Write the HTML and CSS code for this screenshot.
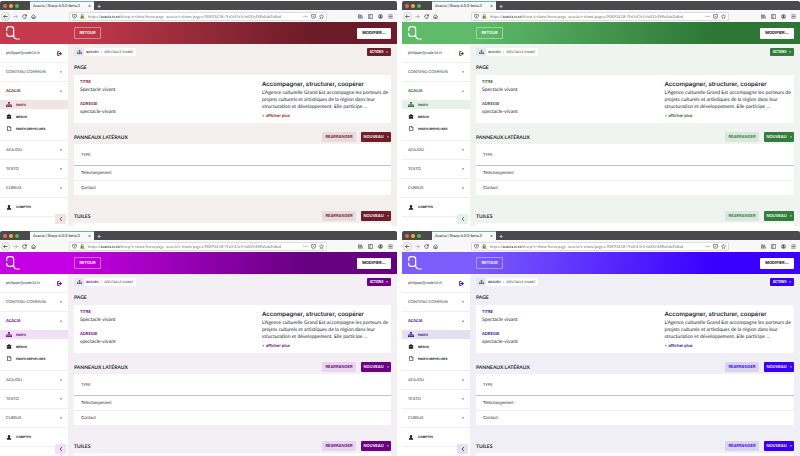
FILE: index.html
```html
<!DOCTYPE html>
<html lang="fr">
<head>
<meta charset="utf-8">
<title>Acacia | Sharp 6.0.0-beta.3</title>
<link rel="stylesheet" href="styles.css">
</head>
<body>
<svg class="sprite" aria-hidden="true">
  <symbol id="i-sitemap" viewBox="0 0 20 16"><path d="M7 0h6v5h-2v2h7v4h2v5h-6v-5h2V9h-5v2h2v5H7v-5h2V9H4v2h2v5H0v-5h2V7h7V5H7z"/></symbol>
  <symbol id="i-case" viewBox="0 0 16 16"><path d="M5 1h6v2h4v5H1V3h4zm1.500 1v1h3V2zM1 9h14v6H1z"/></symbol>
  <symbol id="i-file" viewBox="0 0 16 16"><path d="M3 1h7l4 4v10H3zM10 1v4h4" fill="none" stroke="currentColor" stroke-width="2"/></symbol>
  <symbol id="i-user" viewBox="0 0 16 16"><path d="M8 0a4 4 0 0 1 4 4c0 3-2 5-4 5S4 7 4 4a4 4 0 0 1 4-4zM1 15c0-4 2-5 5-6h4c3 1 5 2 5 6z"/></symbol>
  <symbol id="i-logout" viewBox="0 0 16 16"><path d="M8 2H2v12h6" fill="none" stroke="currentColor" stroke-width="3"/><path d="M5 6h5V2l6 6-6 6v-4H5z"/></symbol>
  <symbol id="i-back" viewBox="0 0 16 16"><path d="M15 8H2m6-6L2 8l6 6" fill="none" stroke="currentColor" stroke-width="2.500"/></symbol>
  <symbol id="i-forward" viewBox="0 0 16 16"><path d="M1 8h13M8 2l6 6-6 6" fill="none" stroke="currentColor" stroke-width="2"/></symbol>
  <symbol id="i-reload" viewBox="0 0 16 16"><path d="M13 4.500A6 6 0 1 0 14 9" fill="none" stroke="currentColor" stroke-width="2.200"/><path d="M15 0v7H8z"/></symbol>
  <symbol id="i-home" viewBox="0 0 16 16"><path d="M1 8l7-6 7 6M3 7v7h10V7M7 14v-4h2v4" fill="none" stroke="currentColor" stroke-width="2"/></symbol>
  <symbol id="i-shield" viewBox="0 0 16 16"><path d="M2 2h12v5c0 4-3 6-6 8-3-2-6-4-6-8zM8 5v6" fill="none" stroke="currentColor" stroke-width="2"/></symbol>
  <symbol id="i-lock" viewBox="0 0 16 16"><path d="M4 7V4a3 3 0 0 1 6 0v3" fill="none" stroke="#555" stroke-width="2"/><path d="M2 7h11v8H2z" fill="#666"/><path d="M10 6l6 10H5z" fill="#e8b320"/></symbol>
  <symbol id="i-pocket" viewBox="0 0 16 16"><path d="M1 2h14v5a7 7 0 0 1-14 0zM5 6l3 3 3-3" fill="none" stroke="currentColor" stroke-width="2"/></symbol>
  <symbol id="i-star" viewBox="0 0 16 16"><path d="M8 1l2 5 5 .5-4 3.500 1.300 5L8 12l-4.300 3L5 10 1 6.500 6 6z" fill="none" stroke="currentColor" stroke-width="1.600"/></symbol>
  <symbol id="i-library" viewBox="0 0 16 16"><path d="M2 1v14M6 1v14M9 3v12M11 3l4 12" fill="none" stroke="currentColor" stroke-width="2.200"/></symbol>
  <symbol id="i-panel" viewBox="0 0 16 16"><path d="M1 2h14v12H1zM6 2v12" fill="none" stroke="currentColor" stroke-width="2"/></symbol>
  <symbol id="i-account" viewBox="0 0 16 16"><circle cx="8" cy="8" r="6.500" fill="none" stroke="currentColor" stroke-width="2"/><path d="M8 3a3 3 0 0 1 2 5l3 4H3l3-4a3 3 0 0 1 2-5z"/></symbol>
  <symbol id="i-menu" viewBox="0 0 16 16"><path d="M1 3h14M1 8h14M1 13h14" fill="none" stroke="currentColor" stroke-width="2"/></symbol>
  <symbol id="i-down" viewBox="0 0 8 8"><path d="M0 2h8L4 7z"/></symbol>
  <symbol id="i-up" viewBox="0 0 8 8"><path d="M0 6h8L4 1z"/></symbol>
  <symbol id="i-left" viewBox="0 0 8 8"><path d="M6 0L2 4l4 4" fill="none" stroke="currentColor" stroke-width="1.500"/></symbol>
  <symbol id="i-logo" viewBox="0 0 42 42"><path d="M2 15V10q0-8 8-8h5q8 0 8 8v14q0 7-7 7H9q-7 0-7-7v-4M23 18v10q0 11 11 11h7" fill="none" stroke="currentColor" stroke-width="3.500"/></symbol>
</svg>

<main class="gallery" id="gallery"></main>

<template id="window">
  <section class="window">
    <header class="titlebar">
      <div class="lights"><i class="light red"></i><i class="light amber"></i><i class="light lime"></i></div>
      <div class="tab"><span>Acacia | Sharp 6.0.0-beta.3</span><button type="button" aria-label="Fermer l'onglet">×</button></div>
      <button class="newtab" type="button" aria-label="Nouvel onglet">+</button>
    </header>
    <div class="toolbar">
      <div class="nav">
        <button class="back" type="button" aria-label="Précédent"><svg><use href="#i-back"/></svg></button>
        <button class="faded" type="button" aria-label="Suivant"><svg><use href="#i-forward"/></svg></button>
        <button type="button" aria-label="Actualiser"><svg><use href="#i-reload"/></svg></button>
        <button type="button" aria-label="Accueil"><svg><use href="#i-home"/></svg></button>
      </div>
      <div class="address">
        <svg><use href="#i-shield"/></svg>
        <svg><use href="#i-lock"/></svg>
        <input type="text" aria-label="Adresse" value="https://acacia.test/sharp/s-show/homepage_acacia/s-show/pages/90893438-7fa0-43c5-b400-48fb4ab2b8ad">
        <span class="dots">•••</span>
        <svg><use href="#i-pocket"/></svg>
        <svg><use href="#i-star"/></svg>
      </div>
      <div class="tools">
        <svg><use href="#i-library"/></svg>
        <svg><use href="#i-panel"/></svg>
        <svg><use href="#i-account"/></svg>
        <svg><use href="#i-menu"/></svg>
      </div>
    </div>
    <div class="banner">
      <svg class="logo"><use href="#i-logo"/></svg>
      <button class="return" type="button">RETOUR</button>
      <button class="edit" type="button">MODIFIER…</button>
    </div>
    <div class="app">
      <nav class="sidebar">
        <div class="row user"><span>philippe@code16.fr</span><a href="#" aria-label="Déconnexion"><svg><use href="#i-logout"/></svg></a></div>
        <a class="row" href="#">CONTENU COMMUN<svg class="caret"><use href="#i-down"/></svg></a>
        <div class="group">
          <a class="row open" href="#">ACACIA<svg class="caret"><use href="#i-up"/></svg></a>
          <a class="item active" href="#"><svg><use href="#i-sitemap"/></svg>PAGES</a>
          <a class="item" href="#"><svg><use href="#i-case"/></svg>MENUS</a>
          <a class="item" href="#"><svg><use href="#i-file"/></svg>PAGES ORPHELINES</a>
        </div>
        <a class="row" href="#">ACAJOU<svg class="caret"><use href="#i-down"/></svg></a>
        <a class="row" href="#">TEXTO<svg class="caret"><use href="#i-down"/></svg></a>
        <a class="row" href="#">CURSUS<svg class="caret"><use href="#i-down"/></svg></a>
        <a class="row account" href="#"><svg><use href="#i-user"/></svg>COMPTES</a>
        <button class="collapse" type="button" aria-label="Réduire le menu"><svg><use href="#i-left"/></svg></button>
      </nav>
      <div class="content">
        <div class="bar top">
          <div class="crumbs"><span class="crumb-icon"><svg><use href="#i-sitemap"/></svg></span><a href="#">ACCUEIL</a><span>/</span><span class="here">SPECTACLE VIVANT</span></div>
          <button class="solid small" type="button">ACTIONS<svg class="caret"><use href="#i-down"/></svg></button>
        </div>
        <h2 class="page-title">PAGE</h2>
        <div class="card details">
          <dl>
            <dt>TITRE</dt><dd>Spectacle vivant</dd>
            <dt>ADRESSE</dt><dd>spectacle-vivant</dd>
          </dl>
          <div class="intro">
            <h3>Accompagner, structurer, coopérer</h3>
            <p>L’Agence culturelle Grand Est accompagne les porteurs de<br>projets culturels et artistiques de la région dans leur<br>structuration et développement. Elle participe …</p>
            <a href="#">+ afficher plus</a>
          </div>
        </div>
        <div class="bar section">
          <h2>PANNEAUX LATÉRAUX</h2>
          <button class="soft" type="button">RÉARRANGER</button>
          <button class="solid" type="button">NOUVEAU<svg class="caret"><use href="#i-down"/></svg></button>
        </div>
        <table class="card">
          <thead><tr><th>TYPE</th></tr></thead>
          <tbody><tr><td>Téléchargement</td></tr><tr><td>Contact</td></tr></tbody>
        </table>
        <div class="bar section last">
          <h2>TUILES</h2>
          <button class="soft" type="button">RÉARRANGER</button>
          <button class="solid" type="button">NOUVEAU<svg class="caret"><use href="#i-down"/></svg></button>
        </div>
        <div class="card rest"></div>
      </div>
    </div>
  </section>
</template>
<script src="script.js"></script>
</body>
</html>
```
FILE: script.js
```js
const gallery = document.getElementById("gallery");
const template = document.getElementById("window");

for (const theme of ["cherry", "forest", "violet", "indigo"]) {
  const copy = template.content.cloneNode(true);
  copy.querySelector(".window").classList.add(theme);
  gallery.append(copy);
}
```
FILE: styles.css
```css
* { box-sizing: border-box; }

body {
  margin: 0;
  background: #fff;
  color: #1a2430;
  font: 4px/6px Inter, "Liberation Sans", sans-serif;
  text-rendering: geometricPrecision;
}

h2, h3, p, dl, dd { margin: 0; }
a { color: inherit; text-decoration: none; }
svg { display: block; flex: none; width: 5px; height: 5px; fill: currentColor; }
button {
  display: flex;
  align-items: center;
  justify-content: center;
  padding: 0;
  border: 0;
  background: none;
  color: inherit;
  font: inherit;
}
.sprite { display: none; }
svg.caret { width: 2px; height: 2px; }

.gallery {
  display: grid;
  grid-template-columns: 397fr 398fr;
  gap: 5px;
  padding-top: 1px;
}

/* Colour themes */
.cherry { --from: #c43a4c; --to: #6c1c28; --solid: #701d2a; --soft: #e8dadd; --active: #f0e4e6; --page: #f2efee; }
.forest { --from: #5fbb6a; --to: #2d7636; --solid: #347d3d; --soft: #dbe7dd; --active: #e5f0e7; --page: #f0f4f0; --label: #2c5a33; }
.violet { --from: #c400e4; --to: #650080; --solid: #6b0082; --soft: #e8d6ee; --active: #f1e0f5; --page: #f3eff5; }
.indigo { --from: #7c5cfa; --to: #3900ff; --solid: #3a00f5; --soft: #d9d4ec; --active: #e4e0f2; --page: #f0eff5; --label: #2c0a9c; }

.window { min-width: 0; overflow: hidden; background: #fff; }

/* Browser frame */
.titlebar {
  display: flex;
  height: 9px;
  border-radius: 2px 2px 0 0;
  background: #4a494b;
  color: #eee;
}
.lights { display: flex; align-items: center; gap: 2px; width: 30px; padding-left: 3px; }
.light { width: 4px; height: 4px; border-radius: 50%; }
.red { background: #ee6256; }
.amber { background: #e5b33c; }
.lime { background: #5abb46; }
.tab {
  display: flex;
  align-items: center;
  justify-content: space-between;
  width: 64px;
  padding: 0 3px;
  border-top: 1px solid #6ea6e8;
  background: #f7f8fa;
  color: #222;
  font-family: Lato, sans-serif;
}
.tab span { white-space: nowrap; }
.tab button { font-size: 5px; }
.newtab { width: 10px; font-size: 7px; }
.toolbar {
  display: flex;
  align-items: center;
  height: 12px;
  background: #f8f8f9;
  color: #444;
}
.nav { display: flex; gap: 4px; width: 69px; padding-left: 3px; }
.nav button { width: 5px; height: 9px; }
.nav .back { width: 9px; margin-left: -2px; margin-right: -1px; border: 1px solid #ccc; border-radius: 50%; background: #fff; }
.faded { opacity: .5; }
.address {
  display: flex;
  flex: 1;
  align-items: center;
  gap: 3px;
  height: 9px;
  max-width: 258px;
  padding: 0 2px;
  border: 1px solid #ddd;
  border-radius: 1px;
  background: #fff;
}
.address input {
  flex: 1;
  min-width: 0;
  height: 7px;
  padding: 0;
  border: 0;
  background: linear-gradient(90deg, #777 12px, #111 12px, #111 33px, #777 33px) text;
  color: transparent;
  font: 4px Lato, sans-serif;
}
.dots { font-size: 3px; }
.tools { display: flex; gap: 5px; margin-left: auto; padding-right: 4px; }

/* Application header */
.banner {
  display: flex;
  align-items: center;
  height: 22px;
  padding: 0 6px;
  background: linear-gradient(100deg, var(--from) 18%, var(--to) 78%);
  color: #fff;
}
.logo { width: 14px; height: 14px; }
.return {
  width: 27px;
  height: 12px;
  margin-left: 54px;
  border: 1px solid rgb(255 255 255 / .4);
  border-radius: 1px;
  font-weight: 600;
}
.edit {
  width: 34px;
  height: 11px;
  margin-left: auto;
  border-radius: 1px;
  background: #fff;
  color: #111;
  font-weight: 700;
}

.app { display: flex; height: 182px; }

/* Sidebar */
.sidebar {
  display: flex;
  flex: none;
  flex-direction: column;
  width: 68px;
  background: #fff;
  color: #30353c;
}
.row {
  display: flex;
  align-items: center;
  justify-content: space-between;
  height: 19px;
  padding: 0 6px;
  border-bottom: 1px solid #eee;
  font-family: Lato, sans-serif;
}
.user a { color: var(--label, var(--solid)); }
.group { padding-bottom: 4px; border-bottom: 1px solid #eee; }
.open { height: 18px; border: 0; color: var(--label, var(--solid)); font-weight: 700; }
.item {
  display: flex;
  align-items: center;
  gap: 4px;
  height: 9px;
  margin-bottom: 3px;
  padding-left: 6px;
  color: #222;
  font-size: 3px;
  font-weight: 700;
}
.item svg, .account svg { width: 6px; }
.active { background: var(--active); color: var(--label, var(--solid)); }
.account { gap: 4px; justify-content: flex-start; color: #222; font: 700 3px Inter, sans-serif; }
.collapse {
  align-self: flex-end;
  flex: none;
  width: 11px;
  height: 10px;
  margin: -3px 2px 0 0;
  border-radius: 1px;
  background: var(--active);
  color: var(--label, var(--solid));
}
.collapse svg { width: 4px; height: 4px; }

/* Page content */
.content {
  display: flex;
  flex: 1;
  flex-direction: column;
  min-width: 0;
  padding: 4px 6px 0;
  background: var(--page);
}
.bar { display: flex; align-items: center; }
.top { justify-content: space-between; height: 8px; }
.crumbs {
  display: flex;
  align-items: center;
  gap: 2px;
  height: 8px;
  padding-right: 2px;
  border-radius: 1px;
  background: #fff;
  font-size: 3px;
}
.crumb-icon { display: grid; place-items: center; width: 10px; height: 8px; background: #e4e7ee; color: #5a6270; }
.crumb-icon svg { width: 5px; height: 4px; }
.crumbs a { color: var(--label, var(--solid)); font-weight: 700; }
.here { color: #444; font-weight: 500; }
.solid, .soft {
  gap: 3px;
  width: 30px;
  height: 10px;
  border-radius: 1px;
  font-size: 4px;
  font-weight: 600;
}
.solid { background: var(--solid); color: #fff; }
.soft { width: 34px; background: var(--soft); color: var(--solid); }
.small { width: 24px; height: 8px; font-size: 3px; font-weight: 700; }
h2 { padding-top: 1px; font-family: Lato, sans-serif; font-size: 5px; font-weight: 700; }
.page-title { margin: 8px 0 4px; }
.card { background: #fff; }
.details {
  display: grid;
  grid-template-columns: minmax(0, 182fr) minmax(0, 123fr);
  height: 48px;
  padding: 3px 6px;
  font-family: Lato, sans-serif;
}
dt { padding-top: 1px; color: var(--label, var(--solid)); font-size: 4px; font-weight: 700; line-height: 6px; }
dd { margin-bottom: 5px; font-size: 5px; line-height: 10px; }
.intro { white-space: nowrap; }
h3 { padding-top: 1px; font: 600 6px/11px Inter, sans-serif; }
.intro p { font-size: 5px; line-height: 7px; }
.intro a { color: var(--label, var(--solid)); font: 600 4px/9px Inter, sans-serif; }
.section { gap: 5px; margin: 9px 0 2px; }
.section h2 { margin-right: auto; }
table { width: 100%; border-collapse: collapse; }
th, td { height: 15px; padding: 0 7px; text-align: left; }
th { height: 21px; border-bottom: 1px solid #bfc2c5; font: 400 4px Lato, sans-serif; }
tbody tr + tr td { border-top: 1px solid #eee; }
.last { margin-top: 16px; }
.rest { flex: 1; }
```
